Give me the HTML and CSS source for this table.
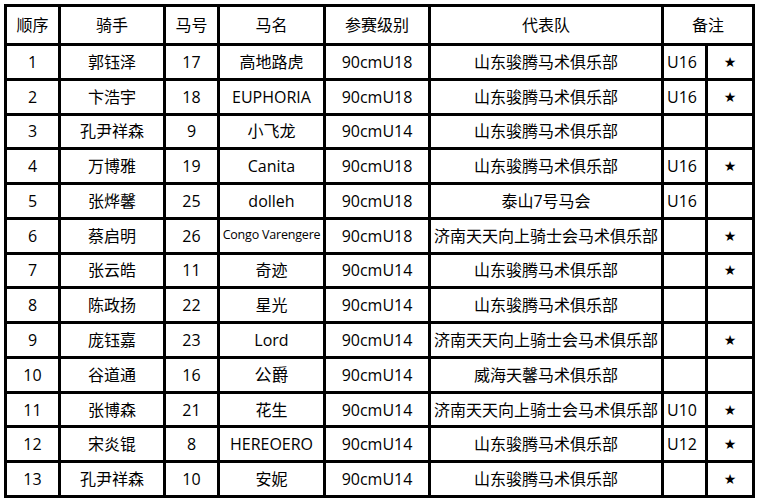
FILE: index.html
```html
<!DOCTYPE html>
<html lang="zh">
<head>
<meta charset="utf-8">
<title>名单</title>
<link rel="stylesheet" href="styles.css">
</head>
<body>
<div class="sheet">
  <div class="c h">顺序</div><div class="c h">骑手</div><div class="c h">马号</div><div class="c h">马名</div><div class="c h">参赛级别</div><div class="c h">代表队</div><div class="c h span2">备注</div>

  <div class="c">1</div><div class="c">郭钰泽</div><div class="c">17</div><div class="c">高地路虎</div><div class="c">90cmU18</div><div class="c">山东骏腾马术俱乐部</div><div class="c l">U16</div><div class="c star">★</div>
  <div class="c">2</div><div class="c">卞浩宇</div><div class="c">18</div><div class="c">EUPHORIA</div><div class="c">90cmU18</div><div class="c">山东骏腾马术俱乐部</div><div class="c l">U16</div><div class="c star">★</div>
  <div class="c">3</div><div class="c">孔尹祥森</div><div class="c">9</div><div class="c">小飞龙</div><div class="c">90cmU14</div><div class="c">山东骏腾马术俱乐部</div><div class="c l"></div><div class="c star"></div>
  <div class="c">4</div><div class="c">万博雅</div><div class="c">19</div><div class="c">Canita</div><div class="c">90cmU18</div><div class="c">山东骏腾马术俱乐部</div><div class="c l">U16</div><div class="c star">★</div>
  <div class="c">5</div><div class="c">张烨馨</div><div class="c">25</div><div class="c">dolleh</div><div class="c">90cmU18</div><div class="c">泰山7号马会</div><div class="c l">U16</div><div class="c star"></div>
  <div class="c">6</div><div class="c">蔡启明</div><div class="c">26</div><div class="c small">Congo Varengere</div><div class="c">90cmU18</div><div class="c">济南天天向上骑士会马术俱乐部</div><div class="c l"></div><div class="c star">★</div>
  <div class="c">7</div><div class="c">张云皓</div><div class="c">11</div><div class="c">奇迹</div><div class="c">90cmU14</div><div class="c">山东骏腾马术俱乐部</div><div class="c l"></div><div class="c star">★</div>
  <div class="c">8</div><div class="c">陈政扬</div><div class="c">22</div><div class="c">星光</div><div class="c">90cmU14</div><div class="c">山东骏腾马术俱乐部</div><div class="c l"></div><div class="c star"></div>
  <div class="c">9</div><div class="c">庞钰嘉</div><div class="c">23</div><div class="c">Lord</div><div class="c">90cmU14</div><div class="c">济南天天向上骑士会马术俱乐部</div><div class="c l"></div><div class="c star">★</div>
  <div class="c">10</div><div class="c">谷道通</div><div class="c">16</div><div class="c big">公爵</div><div class="c">90cmU14</div><div class="c">威海天馨马术俱乐部</div><div class="c l"></div><div class="c star"></div>
  <div class="c">11</div><div class="c">张博森</div><div class="c">21</div><div class="c">花生</div><div class="c">90cmU14</div><div class="c">济南天天向上骑士会马术俱乐部</div><div class="c l">U10</div><div class="c star">★</div>
  <div class="c">12</div><div class="c">宋炎锟</div><div class="c">8</div><div class="c">HEREOERO</div><div class="c">90cmU14</div><div class="c">山东骏腾马术俱乐部</div><div class="c l">U12</div><div class="c star">★</div>
  <div class="c">13</div><div class="c">孔尹祥森</div><div class="c">10</div><div class="c">安妮</div><div class="c">90cmU14</div><div class="c">山东骏腾马术俱乐部</div><div class="c l"></div><div class="c star">★</div>
</div>
</body>
</html>
```
FILE: styles.css
```css
html, body {
  margin: 0;
  padding: 0;
  background: #fff;
}
body {
  padding: 4px 0 0 4px;
  font-family: "Open Sans", "Noto Sans CJK SC", sans-serif;
  color: #000;
}
.sheet {
  display: grid;
  width: 751px;
  height: 494px;
  box-sizing: border-box;
  padding: 3px;
  gap: 3px;
  background: #000;
  grid-template-columns: 51px 102px 51px 103px 102px 230px 41px 44px;
  grid-template-rows: 36px repeat(13, 1fr);
}
.c {
  background: #fff;
  display: flex;
  align-items: center;
  justify-content: center;
  font-size: 16px;
  line-height: 1;
  white-space: nowrap;
  overflow: hidden;
}
.span2 {
  grid-column: span 2;
}
.l {
  justify-content: flex-start;
  padding-left: 3px;
}
.small {
  font-size: 12.5px;
  letter-spacing: -0.2px;
}
.big {
  font-size: 17px;
}
.star {
  font-family: "DejaVu Sans", sans-serif;
  font-size: 14px;
}
```
